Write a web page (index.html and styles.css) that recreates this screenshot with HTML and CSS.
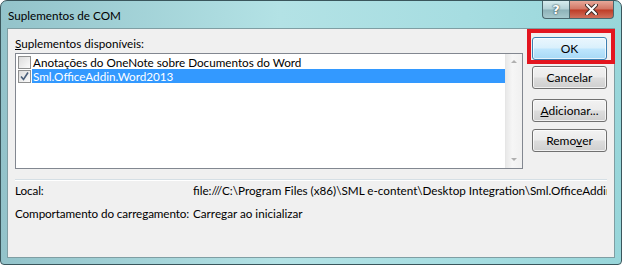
FILE: index.html
```html
<!DOCTYPE html>
<html lang="pt">
<head>
  <meta charset="UTF-8" />
  <title>Suplementos de COM</title>
  <link rel="stylesheet" href="styles.css">
</head>
<body>
  <div class="window">
    <div class="titlebar">
      <span class="title">Suplementos de COM</span>
      <div class="caption">
        <span class="cap help">?</span>
        <span class="cap close">
          <svg width="13" height="11" viewBox="0 0 13 11">
            <path d="M2 1 L11 10 M11 1 L2 10" stroke="#40302c" stroke-width="4" stroke-linecap="round"/>
            <path d="M2 1 L11 10 M11 1 L2 10" stroke="#fff" stroke-width="2" stroke-linecap="round"/>
          </svg>
        </span>
      </div>
    </div>

    <div class="client">
      <div class="top">
        <div class="left">
          <div class="label"><u>S</u>uplementos disponíveis:</div>
          <div class="listbox">
            <div class="items">
              <div class="item">
                <span class="check"></span>
                <span class="text">Anotações do OneNote sobre Documentos do Word</span>
              </div>
              <div class="item selected">
                <span class="check">
                  <svg width="11" height="11" viewBox="0 0 11 11">
                    <path d="M2 5.5 L4.5 8.5 L9 1.5" fill="none" stroke="#4a5f7a" stroke-width="1.6"/>
                  </svg>
                </span>
                <span class="text">Sml.OfficeAddin.Word2013</span>
              </div>
            </div>
            <div class="scrollbar">
              <span class="arrow up"></span>
              <span class="arrow down"></span>
            </div>
          </div>
        </div>

        <div class="buttons">
          <button class="btn default">OK</button>
          <button class="btn cancel">Cancelar</button>
          <button class="btn add"><u>A</u>dicionar...</button>
          <button class="btn remove">Remo<u>v</u>er</button>
        </div>
      </div>

      <div class="sep"></div>

      <div class="info">
        <span class="key">Local:</span>
        <span class="value">file:///C:\Program Files (x86)\SML e-content\Desktop Integration\Sml.OfficeAddin.Word2013.vsto|vstolocal</span>
        <span class="key">Comportamento do carregamento:</span>
        <span class="value">Carregar ao inicializar</span>
      </div>

      <div class="mark"></div>
    </div>
  </div>
</body>
</html>
```

FILE: styles.css
```css
body {
  margin: 0;
  font-family: Lato, "Open Sans", sans-serif;
  font-size: 11.7px;
  color: #000;
  background: #fff;
}
.window {
  position: relative;
  width: 622px;
  height: 265px;
  box-sizing: border-box;
  border: 1px solid #3a565c;
  border-radius: 7px 7px 4px 4px;
  padding: 0 6px 6px 6px;
  background: linear-gradient(to right, #93c3ca, #b3e2e5 45%, #a6dde1 75%, #98d6da);
  display: flex;
  flex-direction: column;
}
.titlebar {
  height: 27px;
  display: flex;
  align-items: flex-start;
  justify-content: space-between;
}
.title {
  margin-top: 6px;
  padding-left: 1px;
  line-height: 16px;
}
.caption {
  display: flex;
  margin-right: 1px;
}
.cap {
  height: 18px;
  display: flex;
  align-items: center;
  justify-content: center;
  border: 1px solid #4a676d;
  border-top: none;
  box-sizing: border-box;
}
.help {
  width: 27px;
  border-radius: 0 0 0 4px;
  border-right: none;
  background: linear-gradient(#d6ecee, #b3d1d6 48%, #8db2b8 52%, #a7c9cd);
  color: #fff;
  font-family: "DejaVu Sans", sans-serif;
  font-weight: bold;
  font-size: 13px;
  text-shadow: 0 0 2px #2c4448, 0 0 1px #2c4448;
}
.close {
  width: 45px;
  border-radius: 0 0 4px 0;
  background: linear-gradient(#e7a899, #d27563 48%, #be3b26 52%, #d0705c);
}
.client {
  position: relative;
  flex: 1;
  background: #f0f0f0;
  border: 1px solid #7f9ea3;
  padding: 6px 7px 0 7px;
}
.top {
  display: flex;
  gap: 9px;
}
.left {
  width: 508px;
}
.label {
  line-height: 16px;
  margin-bottom: 2px;
}
.listbox {
  height: 116px;
  box-sizing: border-box;
  border: 1px solid #828790;
  background: #fff;
  display: flex;
}
.items {
  flex: 1;
  padding-top: 1px;
}
.item {
  height: 14px;
  display: flex;
  align-items: center;
  padding-left: 2px;
}
.check {
  width: 13px;
  height: 13px;
  box-sizing: border-box;
  border: 1px solid #8e8f8f;
  background: linear-gradient(135deg, #dcdcdc, #fbfbfb);
  display: flex;
  align-items: center;
  justify-content: center;
  margin-right: 1px;
}
.text {
  flex: 1;
  line-height: 14px;
  padding-left: 1px;
}
.selected .text {
  background: #3399ff;
  color: #fff;
}
.scrollbar {
  width: 17px;
  background: linear-gradient(to right, #e9e9e9, #f6f6f6 40%, #f0f0f0);
  border-left: 1px solid #e6e6e6;
  display: flex;
  flex-direction: column;
  justify-content: space-between;
  align-items: center;
  padding: 6px 0 7px;
  box-sizing: border-box;
}
.arrow {
  width: 0;
  height: 0;
  border-left: 3px solid transparent;
  border-right: 3px solid transparent;
}
.arrow.up {
  border-bottom: 3px solid #b0b0b0;
}
.arrow.down {
  border-top: 3px solid #b0b0b0;
}
.buttons {
  width: 75px;
  display: flex;
  flex-direction: column;
  padding-top: 2px;
}
.btn {
  height: 23px;
  width: 75px;
  font: inherit;
  font-size: 12px;
  color: #000;
  border: 1px solid #707070;
  border-radius: 3px;
  background: linear-gradient(#f2f2f2, #ebebeb 48%, #dddddd 52%, #cfcfcf);
  box-shadow: inset 0 0 0 1px rgba(255, 255, 255, 0.7);
  padding: 0;
}
.btn.default {
  border-color: #3c7fb1;
  background: linear-gradient(#eaf6fd, #d9f0fc 48%, #bee6fd 52%, #a7d9f5);
}
.btn.cancel {
  margin-top: 6px;
}
.btn.add {
  margin-top: 10px;
}
.btn.remove {
  margin-top: 7px;
}
.sep {
  margin-top: 10px;
  border-top: 1px solid #d5dfe5;
  border-bottom: 1px solid #fff;
}
.info {
  display: grid;
  grid-template-columns: 175px 1fr;
  column-gap: 3px;
  row-gap: 7px;
  margin-top: 1px;
  line-height: 16px;
  white-space: nowrap;
}
.info .key {
  letter-spacing: -0.1px;
}
.info .value {
  overflow: hidden;
}
.mark {
  position: absolute;
  left: 519px;
  top: 0;
  width: 80px;
  height: 27px;
  border: 4px solid #e3151f;
}
```
